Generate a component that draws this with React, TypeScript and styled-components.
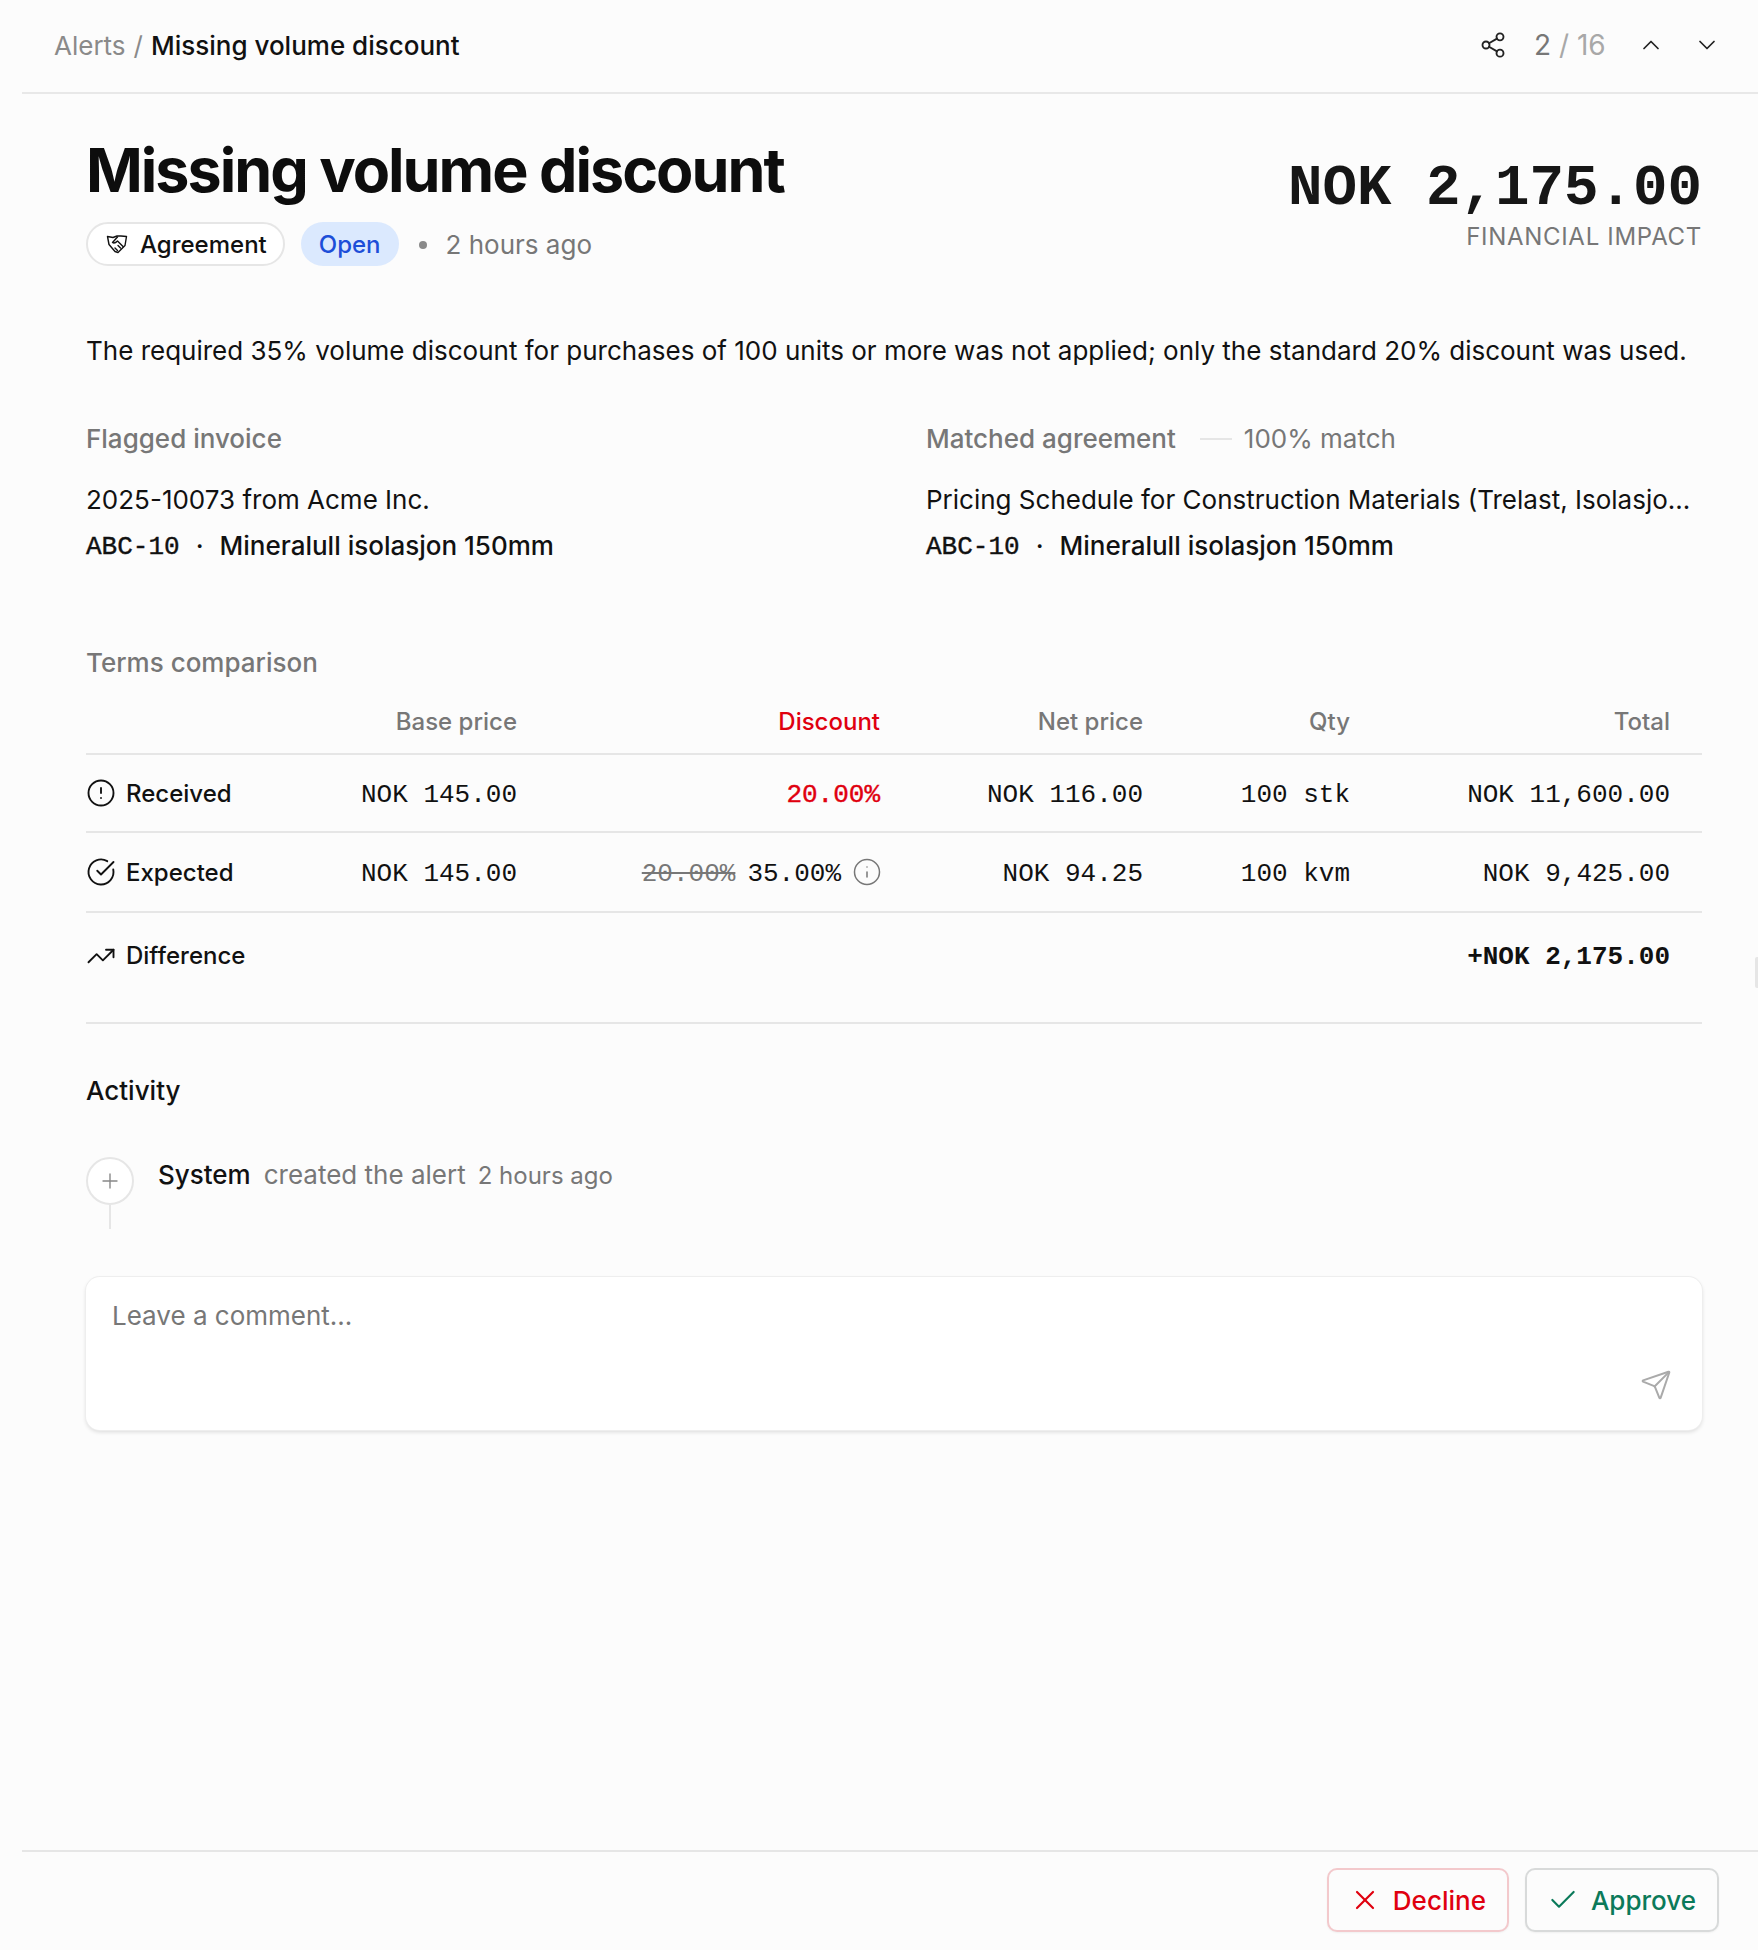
import React from 'react';
import styled, { createGlobalStyle } from 'styled-components';
import {
  Share2, ChevronUp, ChevronDown, CircleAlert, CircleCheckBig,
  TrendingUp, Info, Plus, Send, X, Check,
} from 'lucide-react';

const GlobalStyle = createGlobalStyle`
  html, body {
    margin: 0;
    padding: 0;
    background: #fcfcfc;
    color: #111;
    font-family: Inter, "Liberation Sans", sans-serif;
  }
  * { box-sizing: border-box; }
`;

const MONO = `"Liberation Mono", "DejaVu Sans Mono", monospace`;

const Page = styled.div`
  position: relative;
  width: 1758px;
  height: 1950px;
  padding-left: 22px;
  display: flex;
  flex-direction: column;
`;

const ResizeHandle = styled.span`
  position: absolute;
  right: 0;
  top: 957px;
  width: 3px;
  height: 31px;
  background: #e6e6e6;
  border-radius: 2px 0 0 2px;
`;

const TopBar = styled.header`
  height: 94px;
  flex: none;
  display: flex;
  align-items: center;
  justify-content: space-between;
  padding: 0 37px 2px 32px;
  border-bottom: 2px solid #e8e8e8;
`;

const Crumbs = styled.div`
  display: flex;
  gap: 8px;
  font-size: 26px;
  color: #8a8a8a;
`;

const CrumbCurrent = styled.span`
  color: #111;
  font-weight: 500;
`;

const TopActions = styled.div`
  display: flex;
  align-items: center;
`;

const IconSlot = styled.span`
  display: inline-flex;
  align-items: center;
  justify-content: center;
  width: 28px;
  color: #222;
`;

const Pager = styled.span`
  font-size: 28px;
  color: #a8a8a8;
  margin: 0 31px 0 27px;
  width: 72px;
  white-space: nowrap;
`;

const PagerNow = styled.span`
  color: #777;
`;

const Chevrons = styled.div`
  display: flex;
  gap: 28px;
`;

const Body = styled.main`
  flex: 1;
  padding: 48px 56px 0 64px;
  display: flex;
  flex-direction: column;
`;

const TitleRow = styled.div`
  display: flex;
  justify-content: space-between;
  align-items: flex-start;
`;

const Title = styled.h1`
  margin: 0;
  font-size: 61px;
  line-height: 56px;
  font-weight: 700;
  letter-spacing: -2px;
  color: #0d0d0d;
`;

const Meta = styled.div`
  display: flex;
  align-items: center;
  margin-top: 24px;
  font-size: 26px;
`;

const Chip = styled.span`
  height: 44px;
  display: inline-flex;
  align-items: center;
  gap: 11px;
  padding: 0 16px 0 17px;
  border: 2px solid #e6e6e6;
  border-radius: 22px;
  background: #fff;
  font-size: 24px;
  font-weight: 500;
`;

const Status = styled.span`
  height: 44px;
  display: inline-flex;
  align-items: center;
  margin-left: 16px;
  padding: 0 18px;
  border-radius: 22px;
  background: #dbe9fe;
  color: #1d4ed8;
  font-size: 24px;
  font-weight: 500;
`;

const Dot = styled.span`
  width: 8px;
  height: 8px;
  border-radius: 50%;
  background: #8a8a8a;
  margin: 2px 19px 0 20px;
`;

const Muted = styled.span`
  color: #777;
`;

const Impact = styled.div`
  text-align: right;
  padding-top: 18px;
`;

const ImpactValue = styled.div`
  font-family: ${MONO};
  font-size: 57.5px;
  line-height: 58px;
  font-weight: 700;
  color: #161616;
`;

const ImpactLabel = styled.div`
  margin-top: 4px;
  font-size: 24px;
  line-height: 30px;
  color: #777;
  letter-spacing: 0.7px;
`;

const Summary = styled.p`
  margin: 67px 0 0;
  font-size: 26px;
  line-height: 36px;
  color: #111;
`;

const Refs = styled.div`
  display: grid;
  grid-template-columns: 840px 1fr;
  margin-top: 52px;
`;

const RefCol = styled.div`
  min-width: 0;
`;

const SectionLabel = styled.div`
  display: flex;
  align-items: center;
  font-size: 26px;
  line-height: 36px;
  font-weight: 500;
  color: #777;
`;

const MatchScore = styled.span`
  font-weight: 400;
`;

const Rule = styled.span`
  width: 32px;
  height: 2px;
  background: #e6e6e6;
  margin: 0 12px 0 24px;
`;

const RefName = styled.div`
  margin-top: 25px;
  font-size: 26px;
  line-height: 36px;
  white-space: nowrap;
`;

const RefItem = styled.div`
  margin-top: 10px;
  display: flex;
  align-items: center;
  font-size: 26px;
  line-height: 36px;
  font-weight: 500;
`;

const Sku = styled.span`
  padding-top: 2px;
  line-height: 34px;
  font-family: ${MONO};
  font-size: 26px;
  -webkit-text-stroke: 0.4px currentColor;
`;

const Sep = styled.span`
  margin: 0 16px;
`;

const Terms = styled.section`
  margin-top: 81px;
`;

const Row = styled.div<{ $h: number; $top?: number; $bottom?: number }>`
  display: grid;
  grid-template-columns: 214px 217px 363px 263px 207px 320px;
  padding: ${(p) => p.$top ?? 0}px 32px ${(p) => p.$bottom ?? 0}px 0;
  align-items: center;
  height: ${(p) => p.$h}px;
  border-bottom: 2px solid #e6e6e6;
`;

const HeadCell = styled.div<{ $red?: boolean }>`
  text-align: right;
  font-size: 24px;
  font-weight: 500;
  color: ${(p) => (p.$red ? '#e0000f' : '#777')};
`;

const RowLabel = styled.div`
  display: flex;
  align-items: center;
  gap: 10px;
  font-size: 24px;
  font-weight: 500;
  color: #111;
`;

const Num = styled.div<{ $red?: boolean; $bold?: boolean }>`
  display: flex;
  justify-content: flex-end;
  align-items: center;
  padding-top: 3px;
  font-family: ${MONO};
  font-size: 26px;
  font-weight: ${(p) => (p.$bold ? 700 : 400)};
  color: ${(p) => (p.$red ? '#e0000f' : '#111')};
  -webkit-text-stroke: ${(p) => (p.$red ? '0.4px currentColor' : '0')};
  white-space: pre;
`;

const Struck = styled.span`
  color: #777;
  text-decoration: line-through;
  margin-right: 12px;
`;

const InfoSlot = styled.span`
  display: inline-flex;
  margin-top: -3px;
  margin-left: 11px;
  margin-right: -2px;
  color: #777;
`;

const Activity = styled.section`
  margin-top: 49px;
`;

const ActivityTitle = styled.h2`
  margin: 0;
  font-size: 26px;
  line-height: 36px;
  font-weight: 500;
`;

const Event = styled.div`
  display: flex;
  margin-top: 48px;
`;

const Rail = styled.div`
  display: flex;
  flex-direction: column;
  align-items: center;
  width: 48px;
`;

const RailCircle = styled.span`
  width: 48px;
  height: 48px;
  border-radius: 50%;
  border: 2px solid #e6e6e6;
  background: #fff;
  display: flex;
  align-items: center;
  justify-content: center;
  color: #888;
`;

const RailLine = styled.span`
  width: 2px;
  height: 24px;
  background: #e6e6e6;
`;

const EventText = styled.div`
  margin-left: 24px;
  display: flex;
  align-items: baseline;
  gap: 13px;
  font-size: 26px;
  line-height: 36px;
  height: 36px;
  color: #777;
`;

const EventWho = styled.span`
  color: #111;
  font-weight: 500;
`;

const EventWhen = styled.span`
  margin-left: -1px;
  font-size: 24px;
`;

const CommentBox = styled.div`
  position: relative;
  margin-top: 48px;
  height: 153px;
  background: #fff;
  border-radius: 14px;
  box-shadow: 0 0 0 1px #eeeeee, 0 2px 4px rgba(0, 0, 0, 0.14);
  padding: 21px 26px;
  font-size: 26px;
  line-height: 36px;
  color: #777;
`;

const SendSlot = styled.span`
  position: absolute;
  right: 30px;
  bottom: 29px;
  display: flex;
  color: #aaa;
`;

const Footer = styled.footer`
  height: 100px;
  flex: none;
  display: flex;
  justify-content: flex-end;
  gap: 16px;
  padding: 16px 39px 0 0;
  border-top: 2px solid #e6e6e6;
`;

const ActionButton = styled.button<{ $tone: 'red' | 'green' }>`
  height: 64px;
  display: inline-flex;
  align-items: center;
  gap: 12px;
  padding: 0 21px 0 20px;
  background: #fcfcfc;
  border: 2px solid ${(p) => (p.$tone === 'red' ? '#f3c9cc' : '#d8dada')};
  border-radius: 10px;
  box-shadow: 0 1px 2px rgba(0, 0, 0, 0.05);
  font-family: Inter, sans-serif;
  font-size: 26px;
  font-weight: 500;
  color: ${(p) => (p.$tone === 'red' ? '#e0000f' : '#0b7a5a')};
`;

// shield shaped handshake, lucide's Handshake is rounder than the one in the picture
const AgreementIcon = () => (
  <svg width="24" height="24" viewBox="0 0 24 24" fill="none" stroke="currentColor" strokeWidth="1.4" strokeLinecap="round" strokeLinejoin="round">
    <path d="M2.5 4.5 8 5.5l4-1.5 4 0 5.5.5-1.5 9-7 7-3-1-6-7z" />
    <path d="M12.5 5 7.5 10.5c1.5 1 3 .5 5-1.5l5.5 5.5" />
    <path d="m10 16 2.5 2.5M13 13.5l2.5 2.5" />
  </svg>
);

export default function App() {
  return (
    <Page>
      <GlobalStyle />
      <TopBar>
        <Crumbs>
          <span>Alerts</span>
          <span>/</span>
          <CrumbCurrent>Missing volume discount</CrumbCurrent>
        </Crumbs>
        <TopActions>
          <IconSlot><Share2 size={34} strokeWidth={1.6} /></IconSlot>
          <Pager><PagerNow>2</PagerNow> / 16</Pager>
          <Chevrons>
            <IconSlot><ChevronUp size={32} strokeWidth={1.5} /></IconSlot>
            <IconSlot><ChevronDown size={32} strokeWidth={1.5} /></IconSlot>
          </Chevrons>
        </TopActions>
      </TopBar>
      <Body>
        <TitleRow>
          <div>
            <Title>Missing volume discount</Title>
            <Meta>
              <Chip><AgreementIcon />Agreement</Chip>
              <Status>Open</Status>
              <Dot />
              <Muted>2 hours ago</Muted>
            </Meta>
          </div>
          <Impact>
            <ImpactValue>NOK 2,175.00</ImpactValue>
            <ImpactLabel>FINANCIAL IMPACT</ImpactLabel>
          </Impact>
        </TitleRow>
        <Summary>
          The required 35% volume discount for purchases of 100 units or more was not applied; only the standard 20% discount was used.
        </Summary>
        <Refs>
          <RefCol>
            <SectionLabel>Flagged invoice</SectionLabel>
            <RefName>2025-10073 from Acme Inc.</RefName>
            <RefItem><Sku>ABC-10</Sku><Sep>·</Sep>Mineralull isolasjon 150mm</RefItem>
          </RefCol>
          <RefCol>
            <SectionLabel>Matched agreement<Rule /><MatchScore>100% match</MatchScore></SectionLabel>
            <RefName>Pricing Schedule for Construction Materials (Trelast, Isolasjo...</RefName>
            <RefItem><Sku>ABC-10</Sku><Sep>·</Sep>Mineralull isolasjon 150mm</RefItem>
          </RefCol>
        </Refs>
        <Terms>
          <SectionLabel>Terms comparison</SectionLabel>
          <Row $h={74} $top={8}>
            <span />
            <HeadCell>Base price</HeadCell>
            <HeadCell $red>Discount</HeadCell>
            <HeadCell>Net price</HeadCell>
            <HeadCell>Qty</HeadCell>
            <HeadCell>Total</HeadCell>
          </Row>
          <Row $h={78}>
            <RowLabel><CircleAlert size={30} strokeWidth={1.5} />Received</RowLabel>
            <Num>NOK 145.00</Num>
            <Num $red>20.00%</Num>
            <Num>NOK 116.00</Num>
            <Num>100 stk</Num>
            <Num>NOK 11,600.00</Num>
          </Row>
          <Row $h={80}>
            <RowLabel><CircleCheckBig size={30} strokeWidth={1.5} />Expected</RowLabel>
            <Num>NOK 145.00</Num>
            <Num>
              <Struck>20.00%</Struck>35.00%
              <InfoSlot><Info size={30} strokeWidth={1.2} /></InfoSlot>
            </Num>
            <Num>NOK 94.25</Num>
            <Num>100 kvm</Num>
            <Num>NOK 9,425.00</Num>
          </Row>
          <Row $h={111} $bottom={24}>
            <RowLabel><TrendingUp size={30} strokeWidth={1.5} />Difference</RowLabel>
            <span />
            <span />
            <span />
            <span />
            <Num $bold>+NOK 2,175.00</Num>
          </Row>
        </Terms>
        <Activity>
          <ActivityTitle>Activity</ActivityTitle>
          <Event>
            <Rail>
              <RailCircle><Plus size={24} strokeWidth={1.4} /></RailCircle>
              <RailLine />
            </Rail>
            <EventText>
              <EventWho>System</EventWho>
              <span>created the alert</span>
              <EventWhen>2 hours ago</EventWhen>
            </EventText>
          </Event>
        </Activity>
        <CommentBox>
          Leave a comment...
          <SendSlot><Send size={32} strokeWidth={1.5} /></SendSlot>
        </CommentBox>
      </Body>
      <Footer>
        <ActionButton $tone="red"><X size={32} strokeWidth={1.6} />Decline</ActionButton>
        <ActionButton $tone="green"><Check size={32} strokeWidth={1.6} />Approve</ActionButton>
      </Footer>
      <ResizeHandle />
    </Page>
  );
}
